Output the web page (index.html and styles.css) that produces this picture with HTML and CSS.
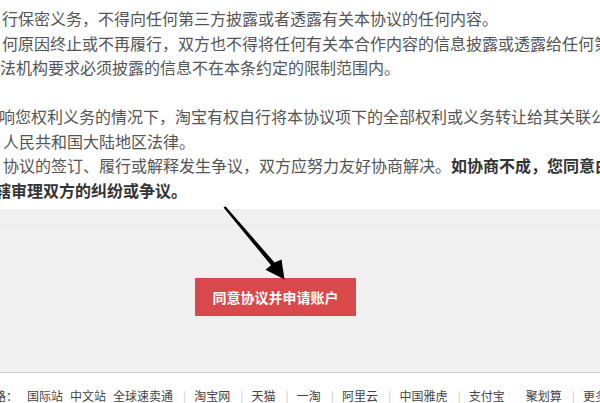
FILE: index.html
```html
<!DOCTYPE html>
<html lang="zh-CN">
<head>
  <meta charset="UTF-8" />
  <meta name="viewport" content="width=device-width, initial-scale=1.0"/>
  <title>淘宝服务协议</title>
  <link rel="stylesheet" href="styles.css">
</head>
<body>
  <div class="agreement">
    <p class="line">行保密义务，不得向任何第三方披露或者透露有关本协议的任何内容。</p>
    <p class="line">何原因终止或不再履行，双方也不得将任何有关本合作内容的信息披露或透露给任何第三方。</p>
    <p class="line cut-one">司法机构要求必须披露的信息不在本条约定的限制范围内。</p>
    <p class="line blank"></p>
    <p class="line cut-small">响您权利义务的情况下，淘宝有权自行将本协议项下的全部权利或义务转让给其关联公司。</p>
    <p class="line indent">人民共和国大陆地区法律。</p>
    <p class="line indent">协议的签订、履行或解释发生争议，双方应努力友好协商解决。<strong>如协商不成，您同意由淘宝住所地人民法院管辖。</strong></p>
    <p class="line cut-half"><strong>管辖审理双方的纠纷或争议。</strong></p>
  </div>

  <div class="action">
    <div class="action-top"></div>
    <div class="action-body">
      <button type="button" class="agree-btn">同意协议并申请账户</button>
    </div>
  </div>

  <div class="footer">
    <span class="footer-label">路：</span>
    <a href="#">国际站</a>
    <a href="#">中文站</a>
    <a href="#">全球速卖通</a>
    <span class="sep">|</span>
    <a href="#">淘宝网</a>
    <span class="sep">|</span>
    <a href="#">天猫</a>
    <span class="sep">|</span>
    <a href="#">一淘</a>
    <span class="sep">|</span>
    <a href="#">阿里云</a>
    <span class="sep">|</span>
    <a href="#">中国雅虎</a>
    <span class="sep">|</span>
    <a href="#">支付宝</a>
    <a href="#" class="gap">聚划算</a>
    <span class="sep">|</span>
    <a href="#">更多</a>
  </div>

  <svg class="arrow" width="600" height="403" viewBox="0 0 600 403">
    <polygon points="223.5,207.5 225.5,206.3 274.5,262.5 281.5,259.5 284.5,279.5 265.5,269.8 271,265.2" fill="#000"/>
  </svg>
</body>
</html>
```

FILE: styles.css
```css
* { box-sizing: border-box; }

body {
  margin: 0;
  width: 600px;
  height: 403px;
  overflow: hidden;
  position: relative;
  font-family: "Noto Sans CJK SC", "Microsoft YaHei", sans-serif;
  background: #fff;
  color: #555;
}

.agreement {
  padding: 6px 0 0 2px;
  height: 209px;
  overflow: hidden;
}

.line {
  margin: 0;
  font-size: 16px;
  line-height: 24.5px;
  height: 24.5px;
  white-space: nowrap;
}

.line strong {
  color: #333;
}

.cut-one { text-indent: -18px; }
.cut-half { text-indent: -23px; }
.cut-small { text-indent: -3px; }
.indent { padding-left: 1px; }

.action {
  background: #f0f0f0;
  height: 164px;
  border-bottom: 1px solid #cfcfcf;
}

.action-top {
  height: 17px;
  border-bottom: 1px solid #e6e6e6;
}

.action-body {
  padding: 52px 0 0 195px;
}

.agree-btn {
  width: 161px;
  height: 38px;
  border: none;
  border-radius: 0;
  background: #d9484b;
  color: #fff;
  font-family: inherit;
  font-size: 14px;
  font-weight: bold;
  padding: 0;
  cursor: pointer;
}

.footer {
  display: flex;
  align-items: center;
  height: 30px;
  padding-top: 14px;
  font-size: 12px;
  white-space: nowrap;
  color: #444;
}

.footer a {
  color: #444;
  text-decoration: none;
  margin-right: 7px;
}

.footer-label {
  margin-left: -6px;
  margin-right: 9px;
}

.footer .sep {
  color: #ccc;
  margin: 0 8px 0 3px;
}

.footer .gap {
  margin-left: 14px;
}

.arrow {
  position: absolute;
  top: 0;
  left: 0;
  pointer-events: none;
}
```
